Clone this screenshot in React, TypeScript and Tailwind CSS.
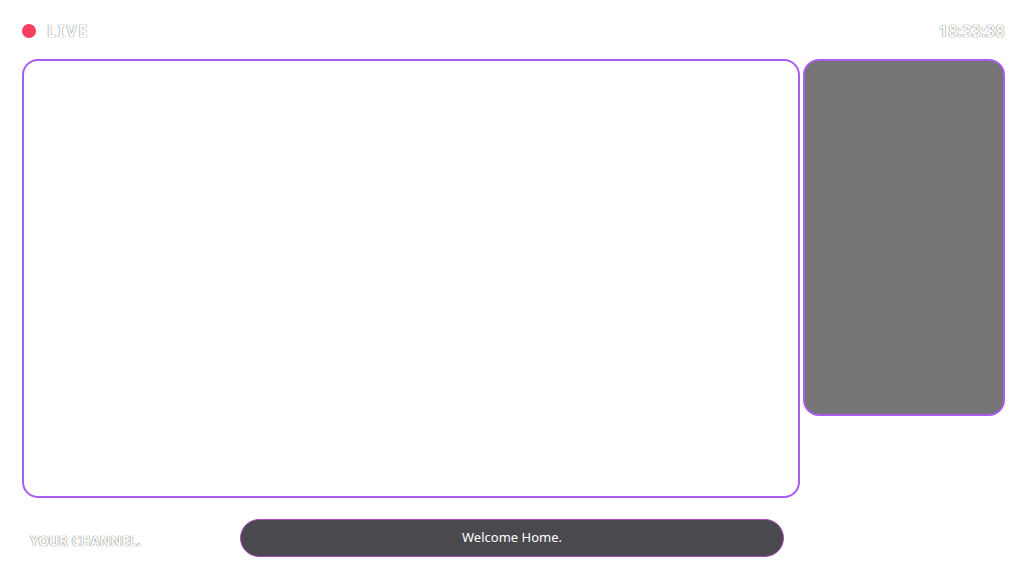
import React from "react";

const shadow = "[text-shadow:0_0_1px_rgba(0,0,0,0.55),0_0_1px_rgba(0,0,0,0.4)]";

export default function App() {
  return (
    <div className="w-[1024px] h-[576px] bg-white flex flex-col pl-[22px] pr-[19px] font-['Noto_Sans',sans-serif] overflow-hidden">
      <div className="h-[59px] flex items-start justify-between pt-[23px]">
        <div className="flex items-center gap-[11px]">
          <div className="w-[14px] h-[14px] rounded-full bg-[#f43f5e]" />
          <span className={`text-white text-[16px] font-bold tracking-[2px] leading-[16px] ${shadow}`}>LIVE</span>
        </div>
        <span className={`text-white text-[16px] font-bold leading-[16px] tracking-[0.3px] ${shadow}`}>18:33:38</span>
      </div>
      <div className="flex gap-[3px] items-start">
        <div className="shrink-0 w-[778px] h-[439px] rounded-[16px] border-2 border-[#ab5cf0] bg-white" />
        <div className="shrink-0 w-[202px] h-[357px] rounded-[16px] border-2 border-[#ab5cf0] bg-[#757575]" />
      </div>
      <div className="flex items-center mt-[21px]">
        <div className="w-[218px] pl-[8px] pt-[4px]">
          <span className={`text-white text-[13.5px] font-bold ${shadow}`}>YOUR CHANNEL.</span>
        </div>
        <div className="w-[544px] h-[38px] rounded-full bg-[#4a494e] border border-[#b04ab8] flex items-center justify-center">
          <span className="text-white text-[13px]">Welcome Home.</span>
        </div>
      </div>
    </div>
  );
}
